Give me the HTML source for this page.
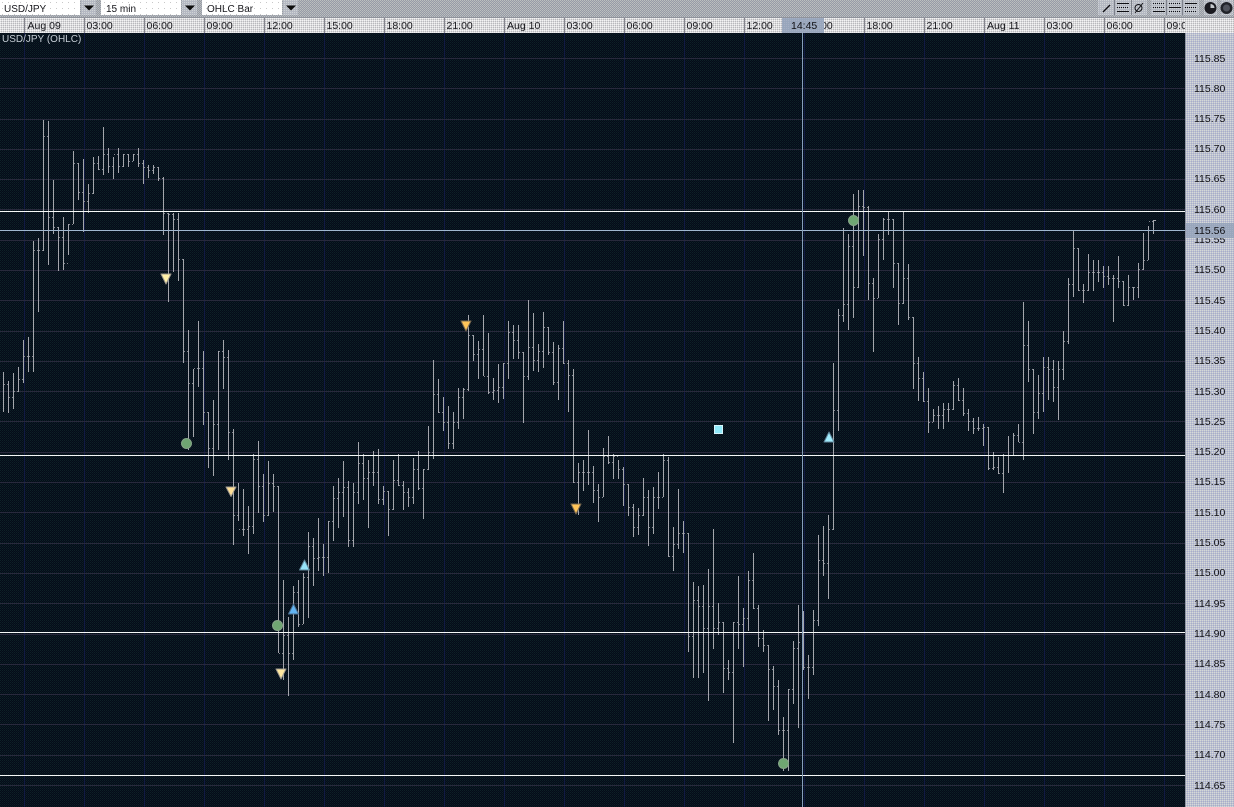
<!DOCTYPE html>
<html>
<head>
<meta charset="utf-8">
<title>USD/JPY (OHLC)</title>
<style>
html,body{margin:0;padding:0;background:#07121c;width:1234px;height:807px;overflow:hidden}
svg{display:block}
text{font-family:"Liberation Sans",sans-serif}
</style>
</head>
<body>
<svg width="1234" height="807" viewBox="0 0 1234 807" xmlns="http://www.w3.org/2000/svg">
<defs>
<pattern id="dk" width="2" height="2" patternUnits="userSpaceOnUse"><rect width="2" height="2" fill="#040d16"/><rect width="1" height="1" fill="#0e1f28"/><rect x="1" y="1" width="1" height="1" fill="#0a1524"/></pattern>
<pattern id="tb" width="2" height="2" patternUnits="userSpaceOnUse"><rect width="2" height="2" fill="#979ba6"/><rect width="1" height="1" fill="#bcc0c0"/><rect x="1" y="1" width="1" height="1" fill="#b4b8bc"/></pattern>
<pattern id="ax" width="2" height="2" patternUnits="userSpaceOnUse"><rect width="2" height="2" fill="#dcdcde"/><rect width="1" height="1" fill="#f4f4f4"/><rect x="1" y="1" width="1" height="1" fill="#b8b8bc"/></pattern>
<pattern id="pr" width="2" height="2" patternUnits="userSpaceOnUse"><rect width="2" height="2" fill="#bcc0d2"/><rect width="1" height="1" fill="#d6dad6"/><rect x="1" y="1" width="1" height="1" fill="#a8aec8"/></pattern>
<pattern id="wh" width="6" height="6" patternUnits="userSpaceOnUse"><rect width="6" height="6" fill="#fff"/><rect x="2" y="2" width="1" height="1" fill="#c8c8c8"/></pattern>
<pattern id="bt" width="2" height="2" patternUnits="userSpaceOnUse"><rect width="2" height="2" fill="#b4b8c2"/><rect width="1" height="1" fill="#d0d4d6"/></pattern>
<pattern id="hl" width="2" height="2" patternUnits="userSpaceOnUse"><rect width="2" height="2" fill="#98a6bc"/><rect width="1" height="1" fill="#a6b0c4"/></pattern>
</defs>

<!-- backgrounds -->
<rect width="1234" height="807" fill="url(#dk)"/>
<rect width="1234" height="18" fill="url(#tb)"/>
<rect y="17" width="1234" height="16" fill="url(#ax)"/>
<rect y="17" width="1234" height="1" fill="#8f939c"/>
<rect x="1185" y="33" width="49" height="774" fill="url(#pr)"/>

<!-- grid -->
<path fill="none" stroke="#101a42" d="M24.5 33V807M84.5 33V807M144.5 33V807M204.5 33V807M264.5 33V807M324.5 33V807M384.5 33V807M444.5 33V807M504.5 33V807M564.5 33V807M624.5 33V807M684.5 33V807M744.5 33V807M804.5 33V807M864.5 33V807M924.5 33V807M984.5 33V807M1044.5 33V807M1104.5 33V807M1164.5 33V807"/>
<path fill="none" stroke="#28293c" d="M0 58.500H1185M0 88.500H1185M0 119.500H1185M0 149.500H1185M0 179.500H1185M0 209.500H1185M0 240.500H1185M0 270.500H1185M0 300.500H1185M0 331.500H1185M0 361.500H1185M0 391.500H1185M0 421.500H1185M0 452.500H1185M0 482.500H1185M0 512.500H1185M0 543.500H1185M0 573.500H1185M0 603.500H1185M0 634.500H1185M0 664.500H1185M0 694.500H1185M0 724.500H1185M0 755.500H1185M0 785.500H1185"/>

<!-- OHLC bars -->
<path transform="translate(.5 0)" fill="none" stroke="#a4a6ac" stroke-width="1" d="M3 372V412M8 381V413M13 373V409M18 367V392M23 340V383M28 337V372M33 241V372M38 238V312M43 120V251M48 121V265M53 180V234M58 227V271M63 217V270M68 224V255M73 151V224M78 163V200M83 159V232M88 184V213M93 157V194M98 156V170M103 127V175M108 148V173M113 157V179M118 148V173M123 154V167M128 154V167M133 154V161M138 148V167M143 160V184M148 165V178M153 165V174M158 167V181M163 177V235M168 213V302M173 213V272M178 213V281M183 259V363M188 330V450M193 369V437M198 321V387M203 351V425M208 412V468M213 400V476M218 351V450M223 340V389M228 350V460M233 429V545M238 483V521M243 489V536M248 506V554M253 454V534M258 441V513M263 474V522M268 461V516M273 474V512M278 486V653M283 580V680M288 617V696M293 586V660M298 580V627M303 573V624M308 532V618M313 538V586M318 518V571M323 544V576M328 521V573M333 486V541M338 478V528M343 461V517M348 481V547M353 483V547M358 442V504M363 454V500M368 460V528M373 451V486M378 449V504M383 486V505M388 491V536M393 460V510M398 454V486M403 481V510M408 488V507M413 458V504M418 451V490M423 469V519M428 426V470M433 360V459M438 379V413M443 397V431M448 406V449M453 412V449M458 388V429M463 388V419M468 315V391M473 335V361M478 341V379M483 315V376M488 333V394M493 378V400M498 364V403M503 363V399M508 321V379M513 325V359M518 325V359M523 352V423M528 300V380M533 313V371M538 344V372M543 312V368M548 327V355M553 342V385M558 345V400M563 321V364M568 360V412M573 369V483M578 463V515M583 460V491M588 430V485M593 466V503M598 484V522M603 448V497M608 436V464M613 454V479M618 460V479M623 467V506M628 484V516M633 504V537M638 508V535M643 478V516M648 490V546M653 487V534M658 472V509M663 454V497M668 457V557M673 527V571M678 489V549M683 521V553M688 533V652M693 582V678M698 586V678M703 585V673M708 569V701M713 529V649M718 603V635M723 622V693M728 660V680M733 622V743M738 576V649M743 608V667M748 571V631M753 553V609M758 605V647M763 630V652M768 645V721M773 666V710M778 680V735M783 717V771M788 689V771M793 641V704M798 605V728M803 611V670M808 655V699M813 610V675M818 535V626M823 526V576M828 515V599M833 363V530M838 309V431M843 228V322M848 234V330M853 194V318M858 190V288M863 190V256M868 206V300M873 278V352M878 234V298M883 218V260M888 212V235M893 219V288M898 263V325M903 212V304M908 264V320M913 317V389M918 357V401M923 372V402M928 388V433M933 409V422M938 406V429M943 403V429M948 403V422M953 381V410M958 378V401M963 388V416M968 409V431M973 418V434M978 417V431M983 424V446M988 427V470M993 452V470M998 457V474M1003 454V493M1008 436V473M1013 433V455M1018 424V442M1023 302V460M1028 321V382M1033 369V434M1038 375V419M1043 357V412M1048 357V400M1053 360V402M1058 361V420M1063 331V380M1068 278V344M1073 231V297M1078 248V291M1083 284V303M1088 254V291M1093 260V291M1098 260V282M1103 266V288M1108 266V285M1113 275V322M1118 256V288M1123 281V306M1128 275V306M1133 287V300M1138 263V298M1143 233V270M1148 226V260M1153 220V234"/>

<!-- open / close ticks -->
<path transform="translate(0 .5)" fill="none" stroke="#83868f" stroke-width="1" stroke-dasharray="1 2 1" d="M4 384h4M9 397h4M14 391h4M19 379h4M24 356h4M29 356h4M34 250h4M39 250h4M44 136h4M49 217h4M54 227h4M59 237h4M64 263h4M69 224h4M74 163h4M79 192h4M84 201h4M89 193h4M94 163h4M99 169h4M104 154h4M109 166h4M114 154h4M119 166h4M124 154h4M129 161h4M134 154h4M139 163h4M144 167h4M149 170h4M154 167h4M159 178h4M164 213h4M169 214h4M174 219h4M179 259h4M184 351h4M189 383h4M194 368h4M199 368h4M204 412h4M209 448h4M214 424h4M219 351h4M224 357h4M229 432h4M234 515h4M239 529h4M244 529h4M249 526h4M254 459h4M259 486h4M264 515h4M269 483h4M274 486h4M279 653h4M284 635h4M289 653h4M294 592h4M299 624h4M304 577h4M309 546h4M314 558h4M319 557h4M324 557h4M329 521h4M334 498h4M339 492h4M344 487h4M349 540h4M354 492h4M359 463h4M364 478h4M369 472h4M374 472h4M379 499h4M384 491h4M389 509h4M394 480h4M399 485h4M404 492h4M409 497h4M414 469h4M419 488h4M424 469h4M429 452h4M434 394h4M439 412h4M444 422h4M449 443h4M454 422h4M459 397h4M464 389h4M469 335h4M474 354h4M479 349h4M484 376h4M489 392h4M494 390h4M499 387h4M504 363h4M509 332h4M514 340h4M519 352h4M524 376h4M529 347h4M534 360h4M539 351h4M544 327h4M549 352h4M554 382h4M559 348h4M564 363h4M569 375h4M574 482h4M579 472h4M584 472h4M589 472h4M594 490h4M599 497h4M604 456h4M609 462h4M614 456h4M619 469h4M624 484h4M629 507h4M634 527h4M639 515h4M644 497h4M649 527h4M654 497h4M659 497h4M664 460h4M669 556h4M674 544h4M679 533h4M684 533h4M689 636h4M694 600h4M699 606h4M704 628h4M709 606h4M714 628h4M719 622h4M724 668h4M729 672h4M734 622h4M739 624h4M744 618h4M749 580h4M754 608h4M759 638h4M764 645h4M769 669h4M774 686h4M779 730h4M784 730h4M789 689h4M794 648h4M799 642h4M804 667h4M809 667h4M814 620h4M819 560h4M824 563h4M829 529h4M834 410h4M839 315h4M844 304h4M849 246h4M854 287h4M859 206h4M864 207h4M869 283h4M874 298h4M879 239h4M884 219h4M889 219h4M894 263h4M899 303h4M904 278h4M909 317h4M914 363h4M919 378h4M924 401h4M929 422h4M934 415h4M939 415h4M944 409h4M949 409h4M954 385h4M959 400h4M964 413h4M969 421h4M974 428h4M979 428h4M984 427h4M989 468h4M994 467h4M999 473h4M1004 455h4M1009 455h4M1014 435h4M1019 442h4M1024 345h4M1029 369h4M1034 412h4M1039 393h4M1044 367h4M1049 369h4M1054 387h4M1059 369h4M1064 341h4M1069 284h4M1074 248h4M1079 290h4M1084 290h4M1089 272h4M1094 272h4M1099 272h4M1104 276h4M1109 278h4M1114 278h4M1119 281h4M1124 305h4M1129 287h4M1134 287h4M1139 269h4M1144 260h4M1149 221h4"/>
<path fill="#a4a6ac" d="M1154 220h2v1h-2z"/>

<!-- horizontal levels -->
<rect x="0" y="211" width="1185" height="1" fill="#f6f8f8"/>
<rect x="0" y="230" width="1185" height="1" fill="#a0b8d0"/>
<rect x="0" y="455" width="1185" height="1" fill="#f6f8f8"/>
<rect x="0" y="632" width="1185" height="1" fill="#f6f8f8"/>
<rect x="0" y="775" width="1185" height="1" fill="#f6f8f8"/>
<!-- crosshair -->
<rect x="802" y="33" width="1" height="774" fill="#86a0ba"/>

<!-- markers -->
<g stroke-linejoin="round">
<path d="M161 274h10l-5 10z" fill="#fff0a8" stroke="#a09a90"/>
<path d="M226 487h10l-5 9.500z" fill="#ffe098" stroke="#a09a90"/>
<path d="M276 669h10l-5 10z" fill="#ffe8a0" stroke="#a09a90"/>
<path d="M461 321h10l-5 10z" fill="#ffc558" stroke="#7a6a50"/>
<path d="M571 504h10l-5 10z" fill="#ffc558" stroke="#7a6a50"/>
<path d="M293.500 604l5 10h-10z" fill="#62b4f2" stroke="#4d7090"/>
<path d="M304.500 560l5 10h-10z" fill="#96e4fa" stroke="#5f8498"/>
<path d="M829 432l5 10h-10z" fill="#a0ecfc" stroke="#5f8498"/>
</g>
<g fill="#6fa672" stroke="#86a488">
<circle cx="186.500" cy="443.500" r="5"/>
<circle cx="277.500" cy="625.500" r="5"/>
<circle cx="783.500" cy="763.500" r="5"/>
<circle cx="853.500" cy="220.500" r="5"/>
</g>
<rect x="714.500" y="425.500" width="8" height="8" fill="#8fe8f8" stroke="#d6f4fa"/>

<!-- chart title -->
<text x="2" y="42" font-size="10" fill="#c4ccd4">USD/JPY (OHLC)</text>

<!-- time axis -->
<path fill="none" stroke="#85858e" d="M24.500 18V33M84.500 18V33M144.500 18V33M204.500 18V33M264.500 18V33M324.500 18V33M384.500 18V33M444.500 18V33M504.500 18V33M564.500 18V33M624.500 18V33M684.500 18V33M744.500 18V33M804.500 18V33M864.500 18V33M924.500 18V33M984.500 18V33M1044.500 18V33M1104.500 18V33M1164.500 18V33"/>
<g font-size="10.500" fill="#17171c">
<text x="27.500" y="29">Aug 09</text><text x="86.500" y="29">03:00</text><text x="146.500" y="29">06:00</text><text x="206.500" y="29">09:00</text><text x="266.500" y="29">12:00</text><text x="326.500" y="29">15:00</text><text x="386.500" y="29">18:00</text><text x="446.500" y="29">21:00</text><text x="507" y="29">Aug 10</text><text x="566.500" y="29">03:00</text><text x="626.500" y="29">06:00</text><text x="686.500" y="29">09:00</text><text x="746.500" y="29">12:00</text><text x="806.500" y="29">15:00</text><text x="866.500" y="29">18:00</text><text x="926.500" y="29">21:00</text><text x="987" y="29">Aug 11</text><text x="1046.500" y="29">03:00</text><text x="1106.500" y="29">06:00</text>
</g>
<svg x="1165" y="18" width="20" height="15"><text x="1.500" y="11" font-size="10.500" fill="#17171c">09:00</text></svg>
<rect x="1185" y="18" width="49" height="15" fill="url(#ax)"/>
<rect x="782" y="18" width="42" height="15" fill="url(#hl)"/>
<text x="791" y="29" font-size="10.500" fill="#101014">14:45</text>

<!-- dropdowns -->
<rect x="0" y="0" width="80" height="15" fill="url(#wh)"/>
<rect x="81" y="0" width="15" height="15" fill="url(#bt)"/>
<path d="M84 5.500h10l-5 5z" fill="#0c0c0c"/>
<text x="4" y="12" font-size="10" fill="#17171c">USD/JPY</text>
<rect x="101" y="0" width="80" height="15" fill="url(#wh)"/>
<rect x="182" y="0" width="15" height="15" fill="url(#bt)"/>
<path d="M185 5.500h10l-5 5z" fill="#0c0c0c"/>
<text x="106" y="12" font-size="10" fill="#17171c">15 min</text>
<rect x="202" y="0" width="80" height="15" fill="url(#wh)"/>
<rect x="283" y="0" width="15" height="15" fill="url(#bt)"/>
<path d="M286 5.500h10l-5 5z" fill="#0c0c0c"/>
<text x="207" y="12" font-size="10" fill="#17171c">OHLC Bar</text>

<!-- toolbar buttons -->
<g>
<rect x="1098" y="0" width="16" height="15" fill="url(#bt)"/>
<rect x="1115" y="0" width="16" height="15" fill="url(#bt)"/>
<rect x="1132" y="0" width="15" height="15" fill="url(#bt)"/>
<rect x="1151" y="0" width="15" height="15" fill="url(#bt)"/>
<rect x="1167" y="0" width="15" height="15" fill="url(#bt)"/>
<rect x="1183" y="0" width="16" height="15" fill="url(#bt)"/>
<rect x="1204" y="0" width="13" height="15" fill="url(#bt)"/>
<rect x="1221" y="0" width="12" height="15" fill="url(#bt)"/>
<path fill="#7d818a" d="M1114 0h1v15h-1zM1131 0h1v15h-1zM1166 0h1v15h-1zM1182 0h1v15h-1z"/>
</g>
<g fill="none" stroke="#101014" stroke-width="1">
<path d="M1103 12L1110 5" stroke-width="1.300"/>
<path d="M1117 3.500h12M1117 11.500h12"/>
<path d="M1117 7.500h12" stroke-dasharray="1 1"/>
<circle cx="1138.500" cy="8" r="3.500"/>
<path d="M1135 13L1143 3"/>
<path d="M1153 11.500h12"/><path d="M1153 3.500h12M1153 7.500h12" stroke-dasharray="1 1"/>
<path d="M1169 7.500h12"/><path d="M1169 3.500h12M1169 11.500h12" stroke-dasharray="1 1"/>
<path d="M1185 3.500h12"/><path d="M1185 7.500h12M1185 11.500h12" stroke-dasharray="1 1"/>
</g>
<circle cx="1210.500" cy="8" r="6" fill="#1a1a20"/>
<path d="M1210.500 4v4h4a4 4 0 0 0-4-4z" fill="#c4c8cc"/>
<circle cx="1226.500" cy="8" r="6" fill="#22242a"/>
<circle cx="1226.500" cy="8" r="3.500" fill="#50535c"/>

<!-- price axis -->
<rect x="1185" y="33" width="1" height="774" fill="#8e94a4"/>
<g font-size="10.500" fill="#101014">
<text x="1194" y="62">115.85</text><text x="1194" y="92">115.80</text><text x="1194" y="122">115.75</text><text x="1194" y="152">115.70</text><text x="1194" y="182">115.65</text><text x="1194" y="213">115.60</text><text x="1194" y="243">115.55</text><text x="1194" y="273">115.50</text><text x="1194" y="304">115.45</text><text x="1194" y="334">115.40</text><text x="1194" y="364">115.35</text><text x="1194" y="395">115.30</text><text x="1194" y="425">115.25</text><text x="1194" y="455">115.20</text><text x="1194" y="485">115.15</text><text x="1194" y="516">115.10</text><text x="1194" y="546">115.05</text><text x="1194" y="576">115.00</text><text x="1194" y="607">114.95</text><text x="1194" y="637">114.90</text><text x="1194" y="667">114.85</text><text x="1194" y="698">114.80</text><text x="1194" y="728">114.75</text><text x="1194" y="758">114.70</text><text x="1194" y="789">114.65</text>
</g>
<rect x="1186" y="223" width="48" height="15" fill="url(#hl)"/>
<text x="1194" y="234" font-size="10.500" fill="#101014">115.56</text>
</svg>
</body>
</html>
